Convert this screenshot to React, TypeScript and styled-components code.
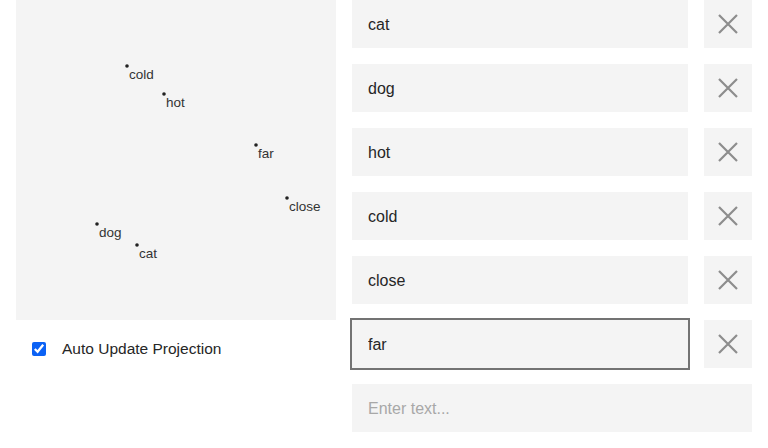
import React from "react";
import styled, { createGlobalStyle } from "styled-components";

const FONT = `"Liberation Sans", Arial, Helvetica, sans-serif`;

const Global = createGlobalStyle`
  html, body { margin: 0; padding: 0; background: #ffffff; }
  body { font-family: ${FONT}; color: #161616; }
  * { box-sizing: border-box; }
`;

const Page = styled.div`
  display: grid;
  grid-template-columns: 320px 400px;
  column-gap: 16px;
  padding: 0 16px;
  width: 768px;
`;

const LeftCol = styled.div`
  display: flex;
  flex-direction: column;
`;

const Chart = styled.svg`
  display: block;
  width: 320px;
  height: 320px;
  background: #f4f4f4;
`;

const CheckRow = styled.label`
  display: flex;
  align-items: center;
  gap: 16px;
  padding: 20px 16px;
  font-size: 15.5px;
  color: #262626;
`;

const Check = styled.input`
  width: 14px;
  height: 14px;
  margin: 0;
  accent-color: #0b62f5;
`;

const RightCol = styled.div`
  display: flex;
  flex-direction: column;
  gap: 16px;
`;

const Row = styled.div`
  display: grid;
  grid-template-columns: 336px 48px;
  column-gap: 16px;
`;

const TextInput = styled.input<{ $focused?: boolean }>`
  height: 48px;
  width: 100%;
  border: none;
  background: #f4f4f4;
  padding: 2px 16px 0;
  font-family: ${FONT};
  font-size: 16px;
  color: #262626;
  outline: ${(p) => (p.$focused ? "2px solid #737373" : "none")};
  &::placeholder { color: #a8a8a8; }
`;

const RemoveButton = styled.button`
  width: 48px;
  height: 48px;
  border: none;
  padding: 0;
  background: #f4f4f4;
  display: flex;
  align-items: center;
  justify-content: center;
`;

const CloseIcon = () => (
  <svg width="20" height="20" viewBox="0 0 20 20">
    <path d="M1 1 L19 19 M19 1 L1 19" stroke="#8d8d8d" strokeWidth="2.2" fill="none" />
  </svg>
);

const points = [
  { label: "cold", x: 111, y: 66 },
  { label: "hot", x: 148, y: 94 },
  { label: "far", x: 240, y: 145 },
  { label: "close", x: 271, y: 198 },
  { label: "dog", x: 81, y: 224 },
  { label: "cat", x: 121, y: 245 },
];

const words = ["cat", "dog", "hot", "cold", "close", "far"];

export default function App() {
  return (
    <>
      <Global />
      <Page>
        <LeftCol>
          <Chart viewBox="0 0 320 320">
            {points.map((p) => (
              <g key={p.label}>
                <circle cx={p.x} cy={p.y} r={1.8} fill="#222" />
                <text x={p.x + 2} y={p.y + 13} fontSize="13.5" fill="#333" fontFamily={FONT}>
                  {p.label}
                </text>
              </g>
            ))}
          </Chart>
          <CheckRow>
            <Check type="checkbox" defaultChecked />
            Auto Update Projection
          </CheckRow>
        </LeftCol>
        <RightCol>
          {words.map((w) => (
            <Row key={w}>
              <TextInput defaultValue={w} $focused={w === "far"} />
              <RemoveButton aria-label="remove">
                <CloseIcon />
              </RemoveButton>
            </Row>
          ))}
          <TextInput placeholder="Enter text..." />
        </RightCol>
      </Page>
    </>
  );
}
